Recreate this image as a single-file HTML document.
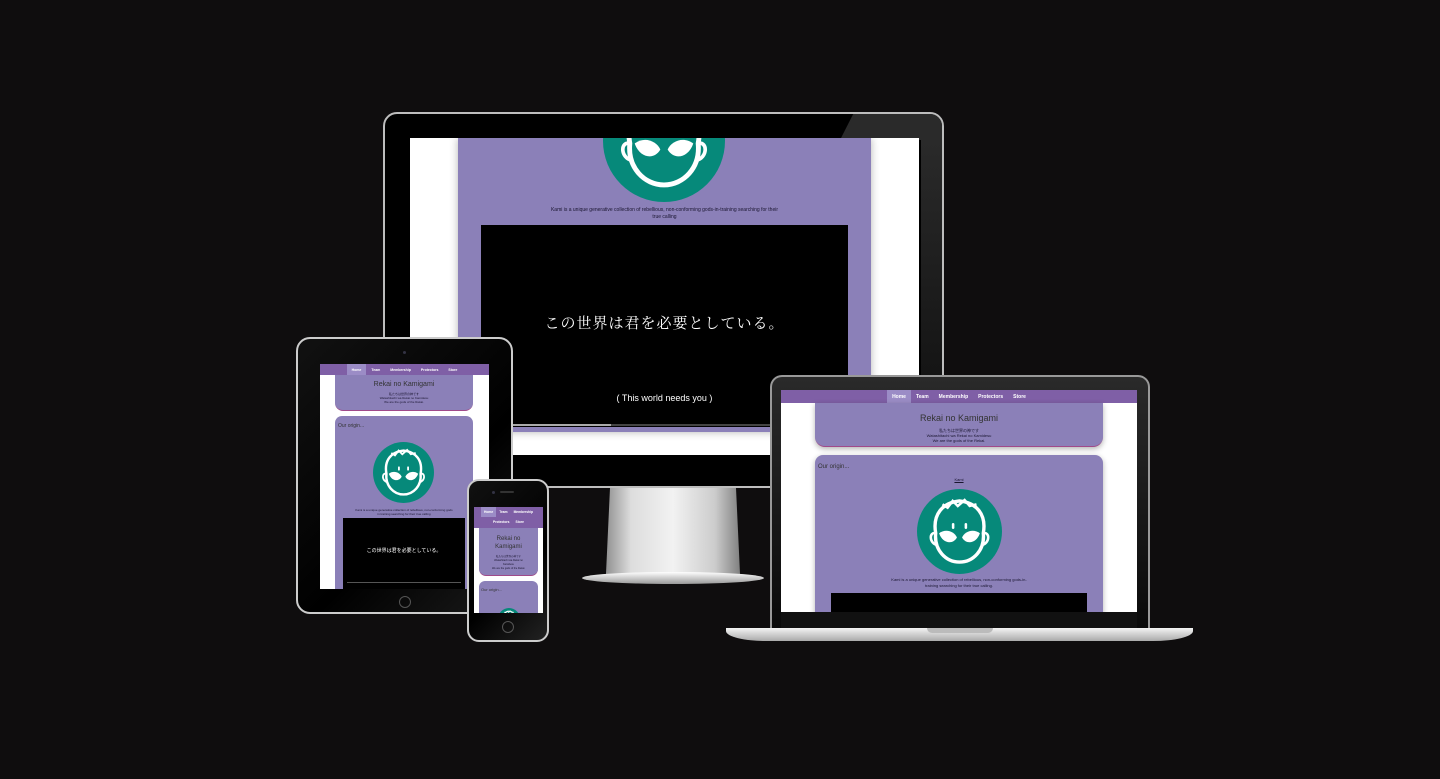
<!DOCTYPE html>
<html><head><meta charset="utf-8">
<style>
*{margin:0;padding:0;box-sizing:border-box}
html,body{width:1440px;height:779px;overflow:hidden;background:#0f0d0e;font-family:"Liberation Sans","Noto Sans CJK JP",sans-serif}
.a{position:absolute}
.pur{background:#8b80b8}
.nav{background:#7f5fa6;display:flex;justify-content:center;align-items:center;color:#fff;font-weight:bold}
.nav span{padding:0 5px;height:100%;display:flex;align-items:center}
.nav span.h{background:#9b8cc6}
.t{color:#1a1530;text-align:center;white-space:nowrap}
</style></head><body>
<svg width="0" height="0" style="position:absolute">
<defs>
<symbol id="face" viewBox="0 0 100 100">
<circle cx="50" cy="50" r="50" fill="#06897a"/>
<path d="M22 52 C18 30 30 16 50 14 C70 16 82 30 78 52 C80 72 66 86 50 86 C34 86 20 72 22 52 Z" fill="none" stroke="#fff" stroke-width="4"/>
<path d="M30 18 L36 22 L42 14 L48 20 L56 13 L62 20 L70 18" fill="none" stroke="#fff" stroke-width="3"/>
<path d="M22 52 C14 50 14 64 24 66 M78 52 C86 50 86 64 76 66" fill="none" stroke="#fff" stroke-width="3"/>
<path d="M26 52 C34 46 44 50 47 57 C42 66 30 64 26 52 Z" fill="#fff"/>
<path d="M74 52 C66 46 56 50 53 57 C58 66 70 64 74 52 Z" fill="#fff"/>
<rect x="41" y="40" width="3" height="7" rx="1.5" fill="#fff"/>
<rect x="56" y="40" width="3" height="7" rx="1.5" fill="#fff"/>
</symbol>
</defs>
</svg>

<!-- MONITOR -->
<div class="a" style="left:383px;top:112px;width:561px;height:376px;border-radius:14px;background:#000;border:2px solid #bdbdbd;overflow:hidden">
  <div class="a" style="left:455px;top:0;width:110px;height:26px;background:#2a2a2a;clip-path:polygon(12% 0,100% 0,100% 100%,0 100%)"></div>
  <div class="a" style="left:536px;top:26px;width:25px;height:350px;background:linear-gradient(#2a2a2a,#0a0a0a)"></div>
</div>
<div class="a" style="left:410px;top:138px;width:509px;height:317px;background:#fff;overflow:hidden">
  <div class="a pur" style="left:48px;top:0;width:413px;height:294px;box-shadow:0 0 8px rgba(0,0,0,.3)"></div>
  <svg class="a" style="left:193px;top:-58px" width="122" height="122"><use href="#face"/></svg>
  <div class="a t" style="left:48px;top:69px;width:413px;font-size:5px;line-height:7px">Kami is a unique generative collection of rebellious, non-conforming gods-in-training searching for their<br>true calling</div>
  <div class="a" style="left:71px;top:87px;width:367px;height:202px;background:#000"></div>
  <div class="a" style="left:71px;top:174px;width:367px;text-align:center;color:#fff;font-size:15px;font-family:'Noto Serif CJK SC',serif;letter-spacing:1px">この世界は君を必要としている。</div>
  <div class="a" style="left:71px;top:255px;width:367px;text-align:center;color:#fff;font-size:9px">( This world needs you )</div>
  <div class="a" style="left:71px;top:286px;width:367px;height:2px;background:#444"></div>
  <div class="a" style="left:71px;top:286px;width:130px;height:2px;background:#aaa"></div>
</div>
<!-- stand -->
<div class="a" style="left:603px;top:488px;width:140px;height:90px;background:linear-gradient(90deg,#888,#ddd 20%,#f2f2f2 50%,#ccc 80%,#777);clip-path:polygon(5% 0,95% 0,98% 100%,2% 100%)"></div>
<div class="a" style="left:582px;top:572px;width:182px;height:12px;border-radius:50%;background:linear-gradient(#fff,#999)"></div>

<!-- LAPTOP -->
<div class="a" style="left:770px;top:375px;width:380px;height:255px;border-radius:12px 12px 0 0;background:linear-gradient(#2a2a2a,#0a0a0a);border:2px solid #999;border-bottom:none"></div>
<div class="a" style="left:781px;top:390px;width:356px;height:222px;background:#fff;overflow:hidden">
  <div class="a nav" style="left:0;top:0;width:356px;height:13px;font-size:5px"><span class="h">Home</span><span>Team</span><span>Membership</span><span>Protectors</span><span>Store</span></div>
  <div class="a pur" style="left:34px;top:13px;width:288px;height:44px;border-radius:0 0 10px 10px;border-bottom:1px solid #a04a8a;box-shadow:0 2px 6px rgba(0,0,0,.3)"></div>
  <div class="a t" style="left:34px;top:23px;width:288px;font-size:9px;color:#333">Rekai no Kamigami</div>
  <div class="a t" style="left:34px;top:38px;width:288px;font-size:4px;line-height:5px">私たちは世界の神です<br>Watashitachi wa Rekai no Kamidesu<br>We are the gods of the Rekai.</div>
  <div class="a pur" style="left:34px;top:65px;width:288px;height:170px;border-radius:8px;box-shadow:0 2px 6px rgba(0,0,0,.3)"></div>
  <div class="a" style="left:37px;top:74px;font-size:6px;color:#333">Our origin...</div>
  <div class="a t" style="left:34px;top:87px;width:288px;font-size:4px;text-decoration:underline">Kami</div>
  <svg class="a" style="left:136px;top:99px" width="85" height="85"><use href="#face"/></svg>
  <div class="a t" style="left:34px;top:187px;width:288px;font-size:4px;line-height:6px">Kami is a unique generative collection of rebellious, non-conforming gods-in-<br>training searching for their true calling.</div>
  <div class="a" style="left:50px;top:203px;width:256px;height:30px;background:#000"></div>
</div>
<div class="a" style="left:781px;top:612px;width:356px;height:16px;background:#111"></div>
<div class="a" style="left:726px;top:628px;width:467px;height:13px;border-radius:0 0 40px 40px/0 0 10px 10px;background:linear-gradient(#f4f4f4,#aaa)"></div>
<div class="a" style="left:927px;top:628px;width:66px;height:5px;border-radius:0 0 6px 6px;background:#bbb"></div>

<!-- TABLET -->
<div class="a" style="left:296px;top:337px;width:217px;height:277px;border-radius:14px;background:linear-gradient(135deg,#111,#000 60%,#1a1a1a);border:2px solid #ccc"></div>
<div class="a" style="left:403px;top:351px;width:3px;height:3px;border-radius:50%;background:#334"></div>
<div class="a" style="left:399px;top:596px;width:12px;height:12px;border-radius:50%;border:1px solid #555"></div>
<div class="a" style="left:320px;top:364px;width:169px;height:225px;background:#fff;overflow:hidden">
  <div class="a nav" style="left:0;top:0;width:169px;height:11px;font-size:3.5px"><span class="h">Home</span><span>Team</span><span>Membership</span><span>Protectors</span><span>Store</span></div>
  <div class="a pur" style="left:15px;top:11px;width:138px;height:36px;border-radius:0 0 8px 8px;border-bottom:1px solid #a04a8a"></div>
  <div class="a t" style="left:15px;top:17px;width:138px;font-size:7px;color:#333">Rekai no Kamigami</div>
  <div class="a t" style="left:15px;top:28px;width:138px;font-size:3px;line-height:4px">私たちは世界の神です<br>Watashitachi wa Rekai no Kamidesu<br>We are the gods of the Rekai.</div>
  <div class="a pur" style="left:15px;top:52px;width:138px;height:180px;border-radius:7px"></div>
  <div class="a" style="left:18px;top:59px;font-size:5px;color:#333">Our origin...</div>
  <svg class="a" style="left:53px;top:78px" width="61" height="61"><use href="#face"/></svg>
  <div class="a t" style="left:15px;top:144px;width:138px;font-size:3px;line-height:4px">Kami is a unique generative collection of rebellious, non-conforming gods<br>in training searching for their true calling</div>
  <div class="a" style="left:23px;top:154px;width:122px;height:71px;background:#000"></div>
  <div class="a" style="left:23px;top:183px;width:122px;text-align:center;color:#fff;font-size:5px">この世界は君を必要としている。</div>
  <div class="a" style="left:27px;top:218px;width:114px;height:1px;background:#555"></div>
</div>

<!-- PHONE -->
<div class="a" style="left:467px;top:479px;width:82px;height:163px;border-radius:12px;background:linear-gradient(135deg,#111,#000 60%,#222);border:2px solid #ccc"></div>
<div class="a" style="left:492px;top:491px;width:3px;height:3px;border-radius:50%;background:#334"></div>
<div class="a" style="left:500px;top:491px;width:14px;height:2px;border-radius:1px;background:#333"></div>
<div class="a" style="left:502px;top:621px;width:12px;height:12px;border-radius:50%;border:1px solid #555"></div>
<div class="a" style="left:474px;top:507px;width:69px;height:106px;background:#fff;overflow:hidden">
  <div class="a nav" style="left:0;top:0;width:69px;height:21px;font-size:3.3px;flex-wrap:wrap;align-content:flex-start"><span class="h" style="height:10px;padding:0 3px">Home</span><span style="height:10px;padding:0 3px">Team</span><span style="height:10px;padding:0 3px">Membership</span><span style="height:10px;padding:0 3px">Protectors</span><span style="height:10px;padding:0 3px">Store</span></div>
  <div class="a pur" style="left:5px;top:21px;width:59px;height:48px;border-radius:0 0 7px 7px;border-bottom:1px solid #a04a8a"></div>
  <div class="a t" style="left:5px;top:28px;width:59px;font-size:6px;line-height:8px;color:#333">Rekai no<br>Kamigami</div>
  <div class="a t" style="left:5px;top:48px;width:59px;font-size:2.5px;line-height:4px">私たちは世界の神です<br>Watashitachi wa Rekai no<br>Kamidesu<br>We are the gods of the Rekai.</div>
  <div class="a pur" style="left:5px;top:74px;width:59px;height:40px;border-radius:6px"></div>
  <div class="a" style="left:7px;top:80px;font-size:4px;color:#333">Our origin...</div>
  <svg class="a" style="left:24px;top:101px" width="22" height="22"><use href="#face"/></svg>
</div>
</body></html>
